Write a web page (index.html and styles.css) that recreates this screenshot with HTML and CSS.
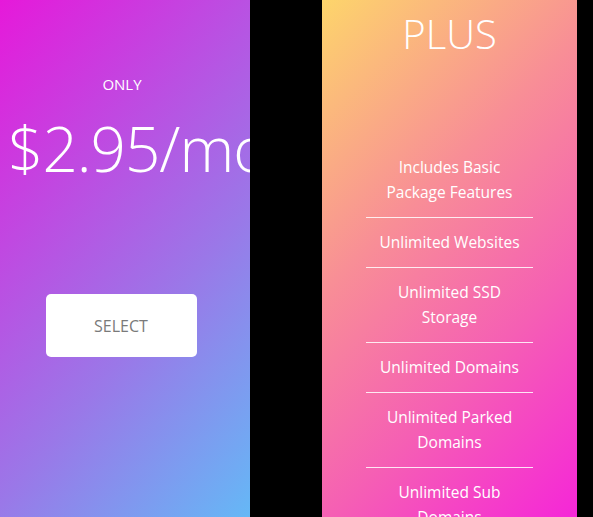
FILE: index.html
```html
<!DOCTYPE html>
<html>
<head>
<meta charset="utf-8">
<link rel="stylesheet" href="styles.css">
</head>
<body>
<div class="page">
  <section class="card card-basic">
    <div class="basic-inner">
      <div class="only">ONLY</div>
      <div class="price">$2.95/mo</div>
      <button class="select">SELECT</button>
    </div>
  </section>
  <section class="card card-plus">
    <h2 class="plan">PLUS</h2>
    <ul class="features">
      <li>Includes Basic<br>Package Features</li>
      <li>Unlimited Websites</li>
      <li>Unlimited SSD<br>Storage</li>
      <li>Unlimited Domains</li>
      <li>Unlimited Parked<br>Domains</li>
      <li>Unlimited Sub<br>Domains</li>
    </ul>
  </section>
</div>
</body>
</html>
```
FILE: styles.css
```css
html, body {
  margin: 0;
  padding: 0;
  background: #000;
  height: 100%;
  overflow: hidden;
}
.page {
  display: flex;
  gap: 72px;
  height: 517px;
  font-family: "Open Sans", "Noto Sans", sans-serif;
  color: #fff;
}
.card {
  height: 100%;
  overflow: hidden;
  flex: none;
}
.card-basic {
  width: 250px;
  background: linear-gradient(130deg, #e619da 0%, #9a78e8 62%, #65b8f6 100%);
}
.basic-inner {
  width: 244px;
  display: flex;
  flex-direction: column;
  align-items: center;
  padding-top: 74px;
}
.only {
  font-size: 15px;
  line-height: 20px;
  font-weight: 400;
}
.price {
  font-size: 62px;
  font-weight: 300;
  line-height: 80px;
  margin-top: 14px;
  white-space: nowrap;
  width: 244px;
  padding-left: 8px;
  box-sizing: border-box;
  letter-spacing: -1px;
}
.select {
  margin-top: 106px;
  margin-left: -2px;
  width: 151px;
  height: 63px;
  border: none;
  border-radius: 5px;
  background: #fff;
  color: #7a7a7a;
  font-family: "Open Sans", "Noto Sans", sans-serif;
  font-size: 16px;
  cursor: pointer;
}
.card-plus {
  width: 255px;
  background: linear-gradient(135deg, #fdd56b 0%, #f88e96 38%, #f55fb4 68%, #f526d8 100%);
  display: flex;
  flex-direction: column;
  align-items: center;
}
.plan {
  margin: 0;
  padding-top: 9px;
  font-size: 40px;
  line-height: 50px;
  font-weight: 300;
  letter-spacing: 0;
}
.features {
  list-style: none;
  margin: 84px 0 0;
  padding: 0;
  width: 167px;
}
.features li {
  text-align: center;
  font-size: 15.5px;
  font-weight: 500;
  line-height: 25px;
  padding: 12px 0;
  border-bottom: 1px solid rgba(255, 255, 255, 0.85);
  white-space: nowrap;
}
```
